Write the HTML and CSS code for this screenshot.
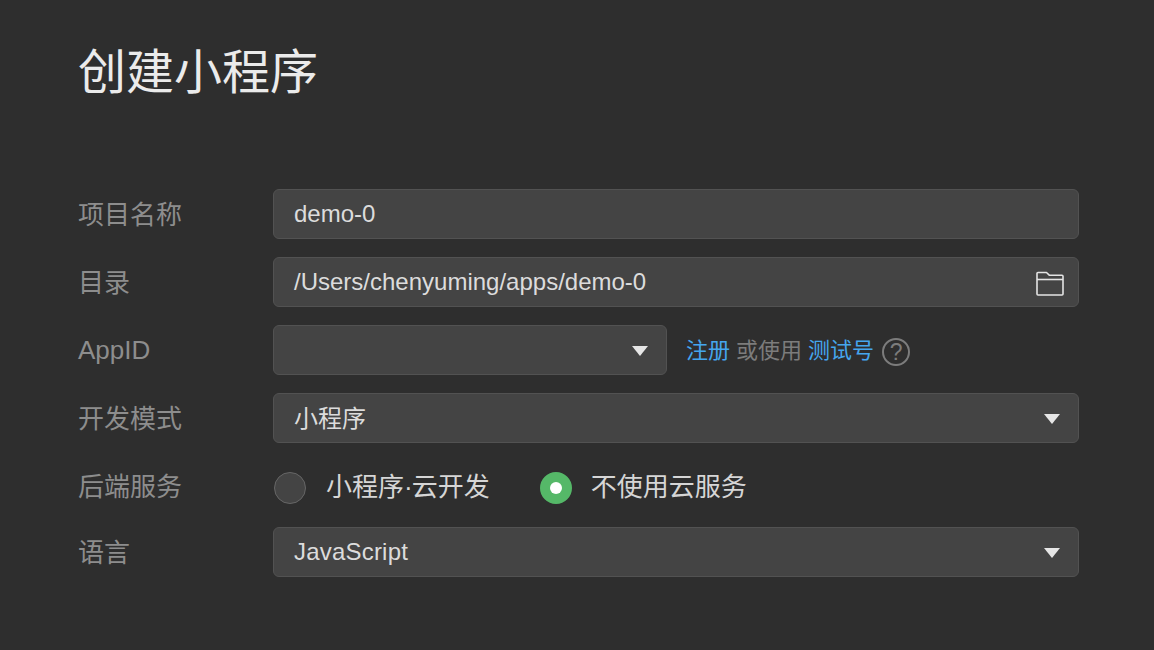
FILE: index.html
```html
<!DOCTYPE html>
<html lang="zh-CN">
<head>
<meta charset="utf-8">
<title>创建小程序</title>
<link rel="stylesheet" href="styles.css">
</head>
<body>
<main class="page">
  <h1 class="title">创建小程序</h1>
  <form class="form">
    <div class="row">
      <span class="label">项目名称</span>
      <div class="field">demo-0</div>
    </div>
    <div class="row">
      <span class="label">目录</span>
      <div class="field">
        <span class="grow">/Users/chenyuming/apps/demo-0</span>
        <svg class="folder" width="28" height="26" viewBox="0 0 28 26" fill="none" stroke="#e4e4e4" stroke-width="1.6" stroke-linejoin="round"><path d="M1 3.5a1 1 0 0 1 1-1h8.5l3 2.8H26a1 1 0 0 1 1 1V24a1 1 0 0 1-1 1H2a1 1 0 0 1-1-1z"/><path d="M1 9.5h26"/></svg>
      </div>
    </div>
    <div class="row">
      <span class="label label-latin">AppID</span>
      <div class="field field-short"><span class="grow"></span><span class="caret"></span></div>
      <div class="links">
        <a class="link">注册</a><span class="muted">或使用</span><a class="link">测试号</a>
        <span class="help">?</span>
      </div>
    </div>
    <div class="row">
      <span class="label">开发模式</span>
      <div class="field"><span class="grow cjk">小程序</span><span class="caret"></span></div>
    </div>
    <div class="row row-radio">
      <span class="label label-radio">后端服务</span>
      <div class="radios">
        <span class="radio"></span><span class="radio-text first">小程序<span class="dot">·</span>云开发</span>
        <span class="radio radio-on"></span><span class="radio-text second">不使用云服务</span>
      </div>
    </div>
    <div class="row">
      <span class="label">语言</span>
      <div class="field"><span class="grow spaced">JavaScript</span><span class="caret"></span></div>
    </div>
  </form>
</main>
</body>
</html>
```
FILE: styles.css
```css
* { box-sizing: border-box; }
html, body { margin: 0; height: 100%; }
body {
  background: #2e2e2e;
  color: #dcdcdc;
  font-family: "Liberation Sans", "Noto Sans CJK SC", sans-serif;
  overflow: hidden;
}
.page { padding: 40px 75px 0 78px; }
.title {
  margin: 0 0 77px;
  height: 72px;
  line-height: 66px;
  font-size: 48px;
  font-weight: 400;
  color: #ebebeb;
}
.form { display: flex; flex-direction: column; gap: 18px; }
.row { display: flex; align-items: center; height: 50px; }
.row-radio { height: 48px; }
.label { width: 195px; flex: none; font-size: 26px; color: #8d8d8d; padding-bottom: 4px; }
.label-latin { padding-bottom: 0; }
.label-radio { padding-bottom: 2px; }
.field {
  flex: 1;
  height: 50px;
  display: flex;
  align-items: center;
  padding: 0 20px;
  background: #444444;
  border: 1px solid #525252;
  border-radius: 6px;
  font-size: 24px;
  color: #dcdcdc;
}
.field-short { flex: none; width: 394px; }
.grow { flex: 1; }
.cjk { padding-bottom: 4px; }
.spaced { letter-spacing: 0.2px; }
.folder { margin-right: -6px; margin-top: 2px; flex: none; }
.caret {
  width: 0;
  height: 0;
  margin-top: 1px;
  margin-right: -2px;
  border-left: 8px solid transparent;
  border-right: 8px solid transparent;
  border-top: 10px solid #e6e6e6;
}
.links { display: flex; align-items: center; margin-left: 19px; font-size: 22px; }
.link { color: #45a6ee; padding-bottom: 4px; }
.muted { color: #7c7c7c; margin: 0 6px; padding-bottom: 4px; }
.help {
  width: 28px;
  height: 28px;
  margin-left: 8px;
  margin-top: 4px;
  border: 2px solid #7c7c7c;
  border-radius: 50%;
  color: #7c7c7c;
  font-size: 23px;
  line-height: 24px;
  text-align: center;
}
.radios { display: flex; align-items: center; }
.radio {
  width: 32px;
  height: 32px;
  margin-top: 6px;
  border-radius: 50%;
  background: #444444;
  border: 1px solid #666666;
  margin-left: 1px;
}
.radio-on {
  margin-left: 0;
  background: #55b868;
  border: 10px solid #55b868;
}
.radio-on::after {
  content: "";
  display: block;
  width: 12px;
  height: 12px;
  border-radius: 50%;
  background: #ffffff;
}
.radio-text { margin-left: 20px; font-size: 26px; color: #d6d6d6; padding-bottom: 2px; }
.radio-text.first { margin-right: 50px; }
.radio-text.second { margin-left: 19px; }
.dot { letter-spacing: -1px; }
```
